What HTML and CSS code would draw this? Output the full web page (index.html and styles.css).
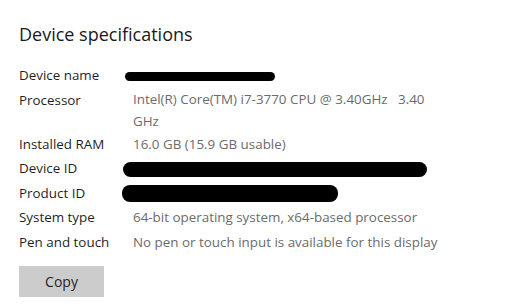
FILE: index.html
```html
<!DOCTYPE html>
<html lang="en">
  <head>
    <meta charset="UTF-8" />
    <meta name="viewport" content="width=device-width, initial-scale=1.0" />
    <title>About</title>
    <link rel="stylesheet" href="styles.css">
  </head>
  <body>
    <section class="specs">
      <h1>Device specifications</h1>

      <dl class="spec-list">
        <dt>Device name</dt>
        <dd><span class="redact redact-name"></span></dd>

        <dt>Processor</dt>
        <dd class="wrap">Intel(R) Core(TM) i7-3770 CPU @ 3.40GHz   3.40 GHz</dd>

        <dt>Installed RAM</dt>
        <dd>16.0 GB (15.9 GB usable)</dd>

        <dt>Device ID</dt>
        <dd><span class="redact redact-device"></span></dd>

        <dt>Product ID</dt>
        <dd><span class="redact redact-product"></span></dd>

        <dt>System type</dt>
        <dd>64-bit operating system, x64-based processor</dd>

        <dt>Pen and touch</dt>
        <dd>No pen or touch input is available for this display</dd>
      </dl>

      <button class="copy-btn">Copy</button>
    </section>
  </body>
</html>
```

FILE: styles.css
```css
body {
  margin: 0;
  padding: 0;
  background-color: #fff;
  font-family: "Open Sans", "Noto Sans", Arial, sans-serif;
  color: #1f1f1f;
}
.specs {
  padding: 20px 19px 0 19px;
}
.specs h1 {
  margin: 0 0 15px 0;
  font-size: 18px;
  font-weight: 400;
  line-height: 28px;
  color: #1a1a1a;
}
.spec-list {
  display: grid;
  grid-template-columns: 114px 312px;
  margin: 0;
  font-size: 13.4px;
  line-height: 24.5px;
}
.spec-list dt {
  margin: 0;
  color: #1f1f1f;
}
.spec-list dd {
  margin: 0;
  color: #6b6b6b;
}
.spec-list dd.wrap {
  white-space: pre-wrap;
  line-height: 22px;
}
.redact {
  display: inline-block;
  background-color: #000;
  border-radius: 8px;
  vertical-align: middle;
}
.redact-name {
  width: 150px;
  height: 9px;
  margin-left: -8px;
}
.redact-device {
  width: 304px;
  height: 15px;
  margin-left: -10px;
}
.redact-product {
  width: 216px;
  height: 17px;
  margin-left: -11px;
}
.copy-btn {
  margin-top: 12px;
  width: 85px;
  height: 31px;
  border: none;
  background-color: #cccccc;
  color: #1f1f1f;
  font-family: inherit;
  font-size: 14px;
  padding: 0;
}
```
